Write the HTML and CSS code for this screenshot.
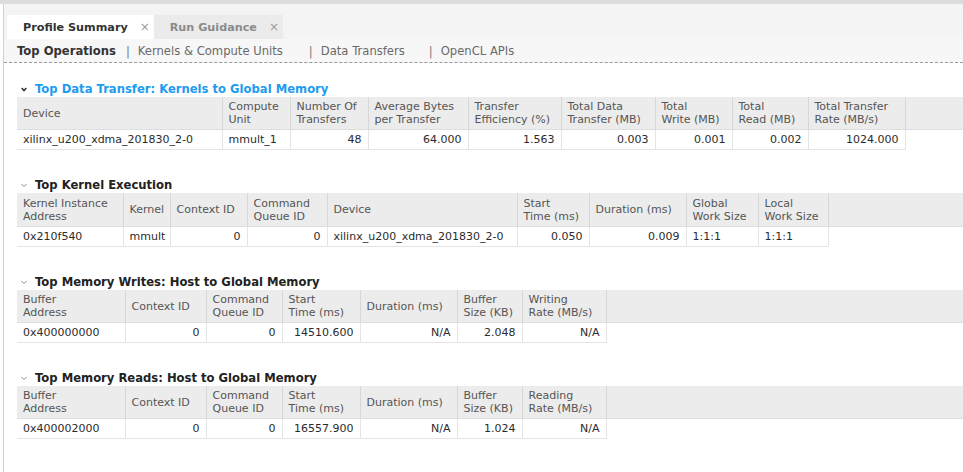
FILE: index.html
```html
<!DOCTYPE html>
<html>
<head>
<meta charset="utf-8">
<link rel="stylesheet" href="styles.css">
</head>
<body>
<div class="topbar"></div>
<div class="main">
  <div class="tabbar">
    <div class="tab active"><span class="tab-label">Profile Summary</span><span class="tab-close">×</span></div>
    <div class="tab"><span class="tab-label">Run Guidance</span><span class="tab-close">×</span></div>
  </div>
  <div class="subtabs">
    <span class="sub active">Top Operations</span>
    <span class="sep">|</span><span class="sub s2">Kernels &amp; Compute Units</span>
    <span class="sep">|</span><span class="sub s3">Data Transfers</span>
    <span class="sep">|</span><span class="sub">OpenCL APIs</span>
  </div>
  <div class="content">
    <section class="sec first">
      <div class="title focus"><svg class="chev" width="6" height="5" viewBox="0 0 6 5"><polyline points="0.7,1 3,3.6 5.3,1" fill="none" stroke="#333" stroke-width="1.5"/></svg><span>Top Data Transfer: Kernels to Global Memory</span></div>
      <table class="grid t1">
        <colgroup><col class="a205"><col class="a68"><col class="a78"><col class="a100"><col class="a93"><col class="a94"><col class="a77"><col class="a76"><col class="a97"><col></colgroup>
        <thead><tr><th>Device</th><th>Compute<br>Unit</th><th>Number Of<br>Transfers</th><th>Average Bytes<br>per Transfer</th><th>Transfer<br>Efficiency (%)</th><th>Total Data<br>Transfer (MB)</th><th>Total<br>Write (MB)</th><th>Total<br>Read (MB)</th><th>Total Transfer<br>Rate (MB/s)</th><th class="fill"></th></tr></thead>
        <tbody><tr><td>xilinx_u200_xdma_201830_2-0</td><td>mmult_1</td><td class="n">48</td><td class="n">64.000</td><td class="n">1.563</td><td class="n">0.003</td><td class="n">0.001</td><td class="n">0.002</td><td class="n">1024.000</td><td class="fill"></td></tr></tbody>
      </table>
    </section>
    <section class="sec">
      <div class="title"><svg class="chev" width="6" height="5" viewBox="0 0 6 5"><polyline points="0.5,1 3,3.6 5.5,1" fill="none" stroke="#8a8a8a" stroke-width="1"/></svg><span>Top Kernel Execution</span></div>
      <table class="grid t2">
        <colgroup><col class="a106"><col class="a47"><col class="a77"><col class="a80"><col class="a190"><col class="a72"><col class="a97"><col class="a72"><col class="a70"><col></colgroup>
        <thead><tr><th>Kernel Instance<br>Address</th><th>Kernel</th><th>Context ID</th><th>Command<br>Queue ID</th><th>Device</th><th>Start<br>Time (ms)</th><th>Duration (ms)</th><th>Global<br>Work Size</th><th>Local<br>Work Size</th><th class="fill"></th></tr></thead>
        <tbody><tr><td>0x210f540</td><td>mmult</td><td class="n">0</td><td class="n">0</td><td>xilinx_u200_xdma_201830_2-0</td><td class="n">0.050</td><td class="n">0.009</td><td>1:1:1</td><td>1:1:1</td><td class="fill"></td></tr></tbody>
      </table>
    </section>
    <section class="sec">
      <div class="title"><svg class="chev" width="6" height="5" viewBox="0 0 6 5"><polyline points="0.5,1 3,3.6 5.5,1" fill="none" stroke="#8a8a8a" stroke-width="1"/></svg><span>Top Memory Writes: Host to Global Memory</span></div>
      <table class="grid t3">
        <colgroup><col class="a108"><col class="a81"><col class="a76"><col class="a78"><col class="a97"><col class="a65"><col class="a84"><col></colgroup>
        <thead><tr><th>Buffer<br>Address</th><th>Context ID</th><th>Command<br>Queue ID</th><th>Start<br>Time (ms)</th><th>Duration (ms)</th><th>Buffer<br>Size (KB)</th><th>Writing<br>Rate (MB/s)</th><th class="fill"></th></tr></thead>
        <tbody><tr><td>0x400000000</td><td class="n">0</td><td class="n">0</td><td class="n">14510.600</td><td class="n">N/A</td><td class="n">2.048</td><td class="n">N/A</td><td class="fill"></td></tr></tbody>
      </table>
    </section>
    <section class="sec">
      <div class="title"><svg class="chev" width="6" height="5" viewBox="0 0 6 5"><polyline points="0.5,1 3,3.6 5.5,1" fill="none" stroke="#8a8a8a" stroke-width="1"/></svg><span>Top Memory Reads: Host to Global Memory</span></div>
      <table class="grid t3">
        <colgroup><col class="a108"><col class="a81"><col class="a76"><col class="a78"><col class="a97"><col class="a65"><col class="a84"><col></colgroup>
        <thead><tr><th>Buffer<br>Address</th><th>Context ID</th><th>Command<br>Queue ID</th><th>Start<br>Time (ms)</th><th>Duration (ms)</th><th>Buffer<br>Size (KB)</th><th>Reading<br>Rate (MB/s)</th><th class="fill"></th></tr></thead>
        <tbody><tr><td>0x400002000</td><td class="n">0</td><td class="n">0</td><td class="n">16557.900</td><td class="n">N/A</td><td class="n">1.024</td><td class="n">N/A</td><td class="fill"></td></tr></tbody>
      </table>
    </section>
  </div>
</div>
</body>
</html>
```
FILE: styles.css
```css
html, body {
  margin: 0;
  padding: 0;
  background: #ffffff;
  font-family: "DejaVu Sans", sans-serif;
  font-size: 11px;
  color: #2b2b2b;
}
.topbar {
  height: 4px;
  background: #dcdcdc;
}
.main {
  margin-left: 3px;
  border-left: 1px solid #d2d2d2;
  min-height: 468px;
}
.tabbar {
  display: flex;
  background: #f4f4f4;
  padding: 11px 0 0 3px;
  height: 24px;
}
.tab {
  display: flex;
  align-items: center;
  height: 24px;
  padding: 0 0 0 16px;
  background: #ebebeb;
  font-weight: bold;
  font-size: 11.2px;
  color: #8a8a8a;
}
.tab.active {
  background: #ffffff;
  color: #333333;
}
.tab .tab-close {
  font-weight: normal;
  font-size: 12px;
  color: #9a9a9a;
  margin-left: 12px;
  width: 14px;
}
.subtabs {
  display: flex;
  align-items: center;
  height: 23px;
  background: #f7f7f7;
  padding-left: 13px;
  border-bottom: 1px dashed #9a9a9a;
  font-size: 11.6px;
  color: #6a6a6a;
}
.sub.active {
  font-weight: bold;
  color: #333;
}
.sep {
  margin: 0 8px 0 10px;
  color: #777;
}
.s2 { margin-right: 16px; }
.s3 { margin-right: 14px; }
.content {
  padding-left: 13px;
}
.sec {
  margin-top: 27px;
}
.sec.first {
  margin-top: 18px;
}
.title {
  display: flex;
  align-items: center;
  height: 16px;
  font-weight: bold;
  font-size: 11.6px;
  color: #222;
}
.title.focus {
  color: #1d9bf0;
}
.chev {
  margin: 1px 8px 0 4px;
}
.grid {
  border-collapse: collapse;
  table-layout: fixed;
  width: 946px;
}
.grid th {
  background: #ececec;
  font-weight: normal;
  text-align: left;
  color: #555555;
  padding: 0 0 0 6px;
  line-height: 13px;
  height: 32px;
  border-left: 1px solid #d7d7d7;
  border-bottom: 1px solid #dedede;
  vertical-align: middle;
  overflow: hidden;
  white-space: nowrap;
}
.grid th:first-child { border-left: none; }
.grid th.fill { border-left: 1px solid #d7d7d7; }
.grid td {
  height: 19px;
  padding: 0 6px;
  border-left: 1px solid #e4e4e4;
  border-bottom: 1px solid #e4e4e4;
  white-space: nowrap;
  overflow: hidden;
  color: #2b2b2b;
}
.grid td:first-child { border-left: none; }
.grid td.n { text-align: right; }
.grid td.fill { border-bottom: none; }
.t2 th { height: 33px; }
.t3 th { height: 32px; }
.a205 { width: 205px; }
.a68 { width: 68px; }
.a78 { width: 78px; }
.a100 { width: 100px; }
.a93 { width: 93px; }
.a94 { width: 94px; }
.a77 { width: 77px; }
.a76 { width: 76px; }
.a97 { width: 97px; }
.a106 { width: 106px; }
.a47 { width: 47px; }
.a80 { width: 80px; }
.a190 { width: 190px; }
.a72 { width: 72px; }
.a70 { width: 70px; }
.a108 { width: 108px; }
.a81 { width: 81px; }
.a65 { width: 65px; }
.a84 { width: 84px; }
```
